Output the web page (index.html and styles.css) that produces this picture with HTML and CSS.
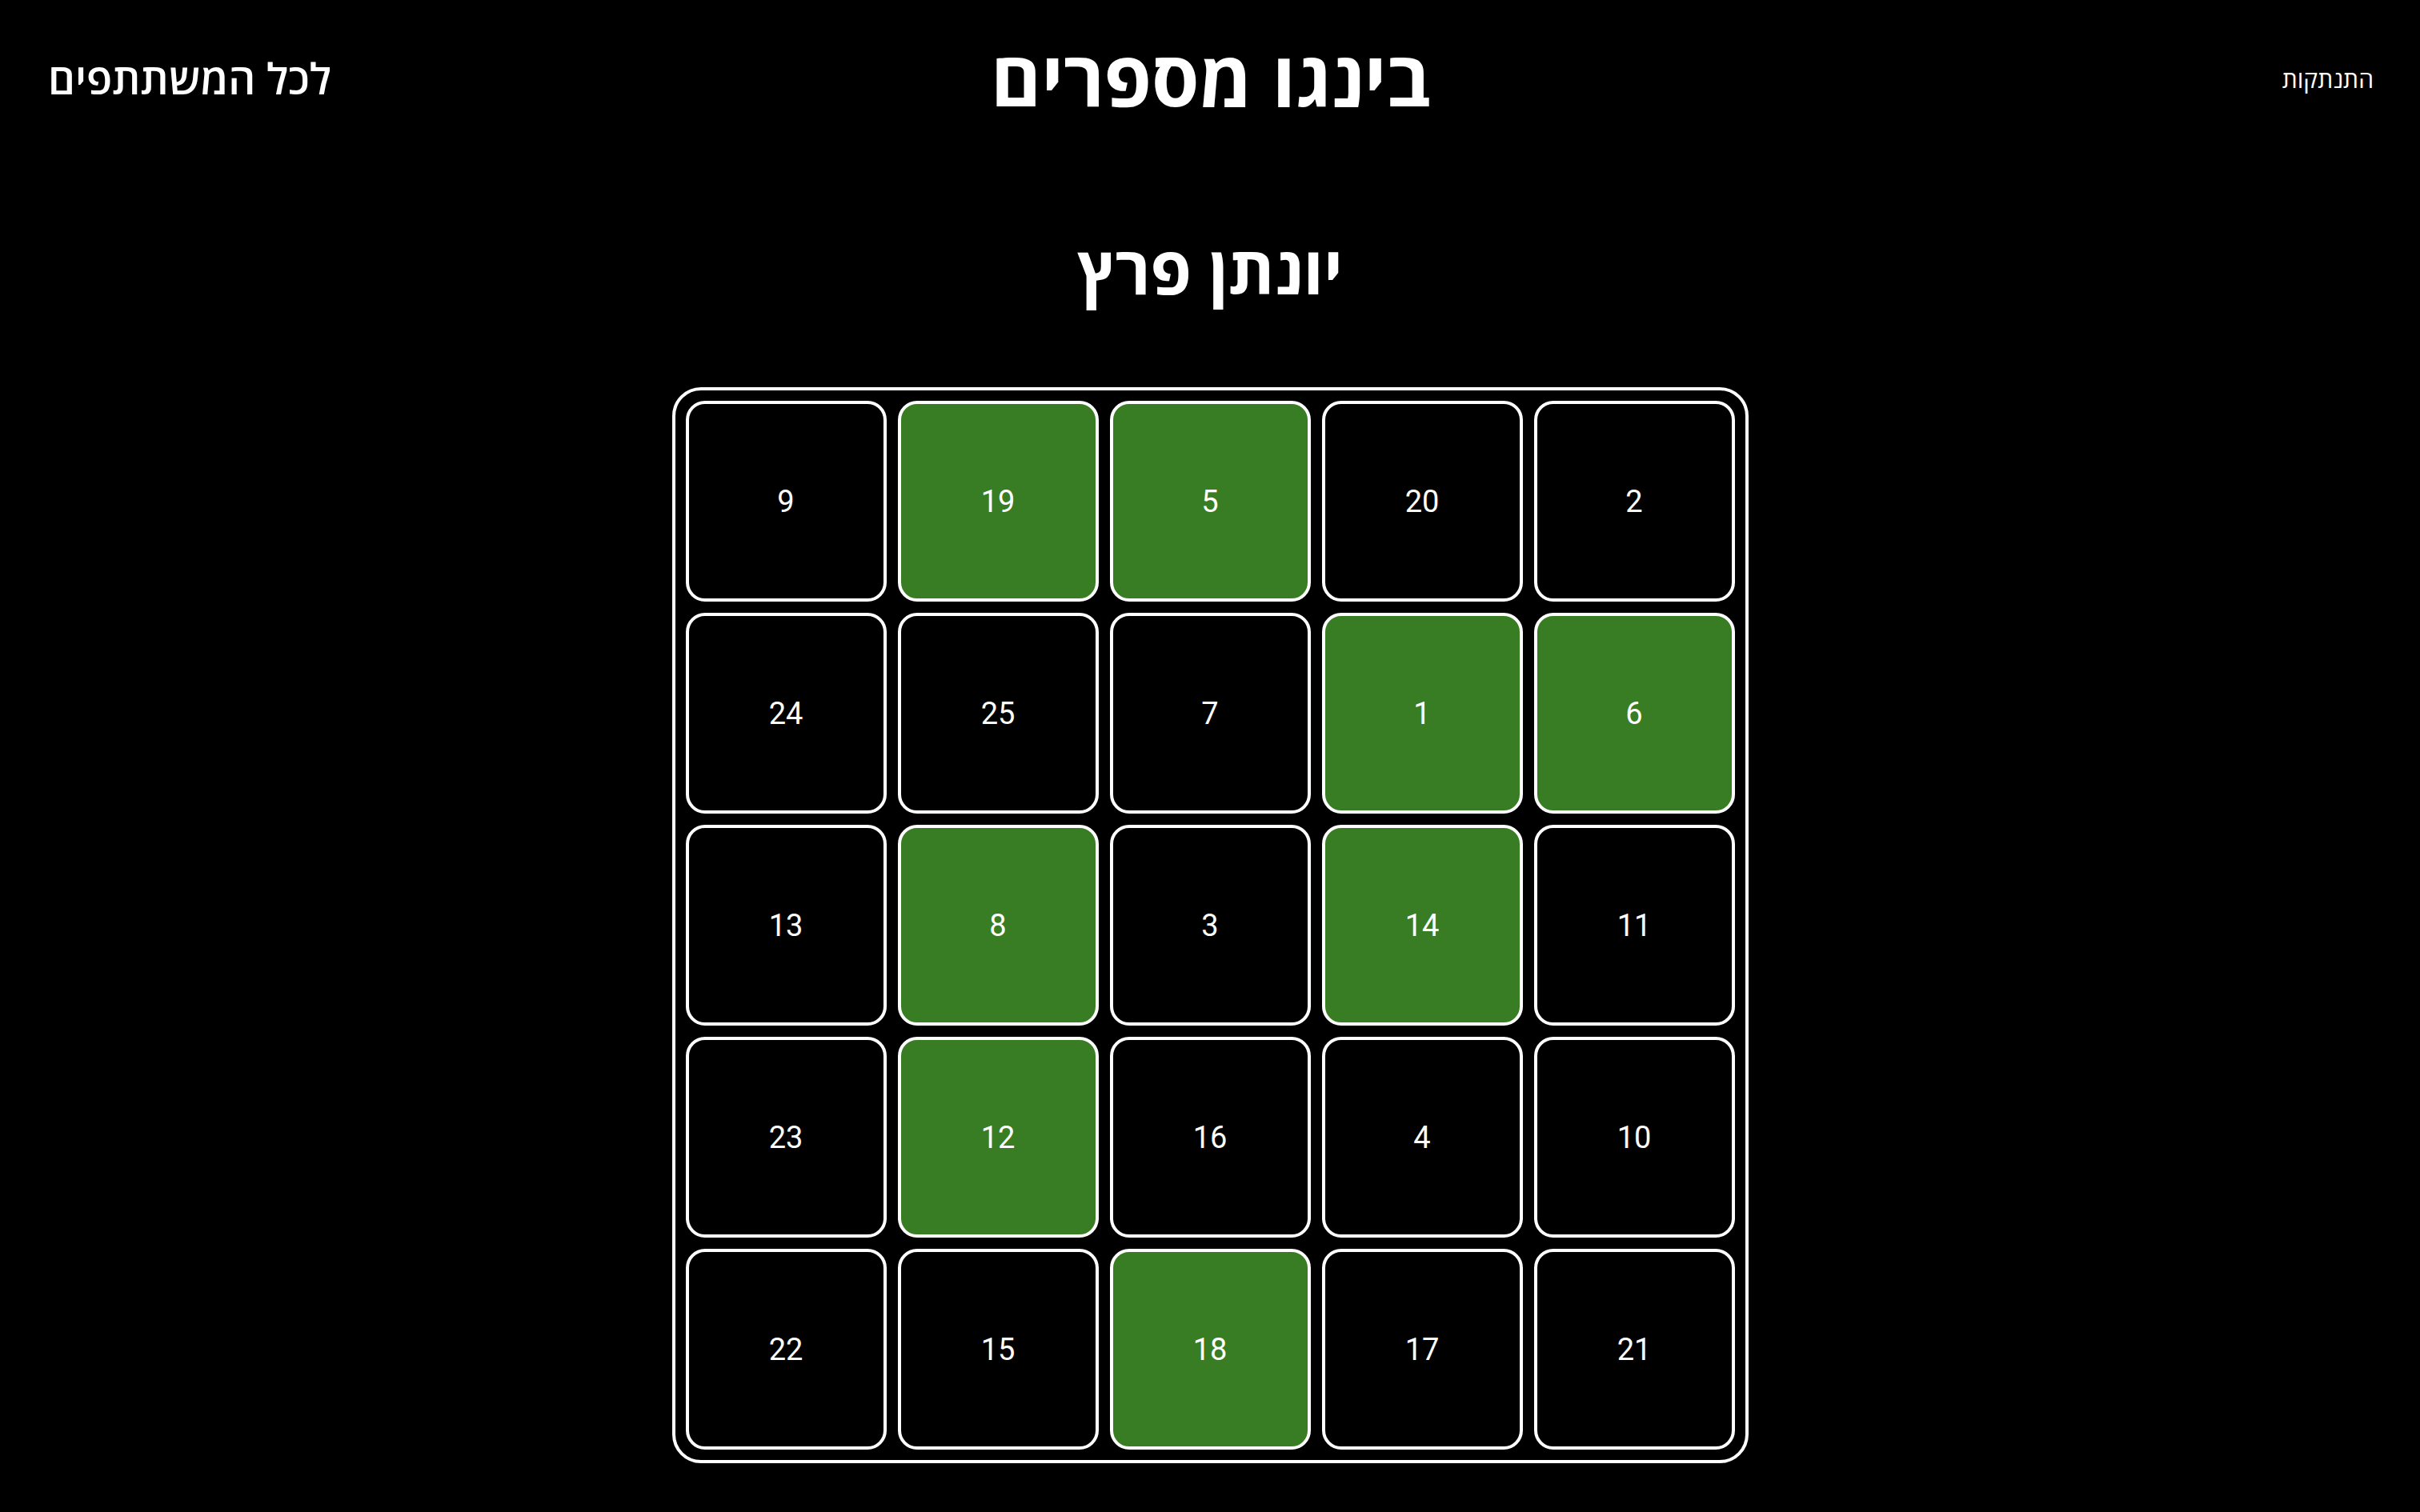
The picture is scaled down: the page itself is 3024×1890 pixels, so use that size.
FILE: index.html
```html
<!DOCTYPE html>
<html lang="he" dir="rtl">
<head>
<meta charset="utf-8">
<title>בינגו מספרים</title>
<link rel="stylesheet" href="styles.css">
</head>
<body>
<header class="topbar">
  <div class="logout">התנתקות</div>
  <h1 class="site-title">בינגו מספרים</h1>
  <a class="all-link" href="#">לכל המשתתפים</a>
</header>
<main class="main">
  <h2 class="player-name">יונתן פרץ</h2>
  <div class="board">
    <div class="cell">9</div><div class="cell marked">19</div><div class="cell marked">5</div><div class="cell">20</div><div class="cell">2</div>
    <div class="cell">24</div><div class="cell">25</div><div class="cell">7</div><div class="cell marked">1</div><div class="cell marked">6</div>
    <div class="cell">13</div><div class="cell marked">8</div><div class="cell">3</div><div class="cell marked">14</div><div class="cell">11</div>
    <div class="cell">23</div><div class="cell marked">12</div><div class="cell">16</div><div class="cell">4</div><div class="cell">10</div>
    <div class="cell">22</div><div class="cell">15</div><div class="cell marked">18</div><div class="cell">17</div><div class="cell">21</div>
  </div>
</main>
</body>
</html>
```
FILE: styles.css
```css
html, body {
  margin: 0;
  padding: 0;
  background: #000;
  color: #fff;
  font-family: "Open Sans", "Liberation Sans", sans-serif;
}

.topbar {
  display: grid;
  grid-template-columns: 1fr auto 1fr;
  align-items: center;
  padding: 49px 58px 0 60px;
}

.logout {
  justify-self: start;
  font-size: 30px;
  font-weight: 500;
  line-height: 1;
  margin-top: 4px;
}

.site-title {
  margin: 0;
  font-size: 96px;
  font-weight: 700;
  line-height: 1;
}

.all-link {
  justify-self: end;
  color: #fff;
  text-decoration: none;
  font-size: 53px;
  font-weight: 600;
  line-height: 1;
}

.main {
  display: flex;
  flex-direction: column;
  align-items: center;
}

.player-name {
  margin: 149px 0 0;
  font-size: 83px;
  font-weight: 700;
  line-height: 1;
}

.board {
  direction: ltr;
  margin-top: 107px;
  display: grid;
  grid-template-columns: repeat(5, 251px);
  grid-auto-rows: 251px;
  gap: 14px;
  padding: 13px;
  border: 4px solid #fff;
  border-radius: 36px;
}

.cell {
  box-sizing: border-box;
  border: 4px solid #fff;
  border-radius: 24px;
  display: flex;
  align-items: center;
  justify-content: center;
  font-family: Roboto, "Liberation Sans", sans-serif;
  font-size: 38px;
}

.cell.marked {
  background: #387d23;
}
```
